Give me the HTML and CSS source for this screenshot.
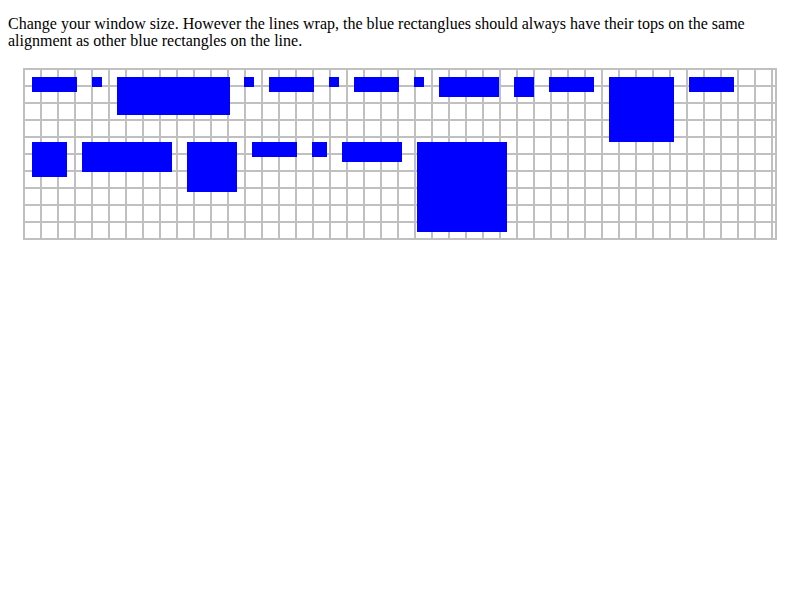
FILE: index.html
```html
<!DOCTYPE html>
<html>
<head>
<meta charset="utf-8">
<title>Inline block top alignment</title>
<link rel="stylesheet" href="styles.css">
</head>
<body>
<p class="intro">Change your window size. However the lines wrap, the blue rectanglues should always have their tops on the same alignment as other blue rectangles on the line.</p>
<div class="grid">
  <div class="row">
    <div class="box" style="width:45px;height:15px"></div>
    <div class="box" style="width:10px;height:10px"></div>
    <div class="box tight" style="width:113px;height:38px"></div>
    <div class="box" style="width:10px;height:10px"></div>
    <div class="box" style="width:45px;height:15px"></div>
    <div class="box" style="width:10px;height:10px"></div>
    <div class="box" style="width:45px;height:15px"></div>
    <div class="box" style="width:10px;height:10px"></div>
    <div class="box" style="width:60px;height:20px"></div>
    <div class="box" style="width:20px;height:20px"></div>
    <div class="box" style="width:45px;height:15px"></div>
    <div class="box" style="width:65px;height:65px"></div>
    <div class="box" style="width:45px;height:15px"></div>
  </div>
  <div class="row">
    <div class="box" style="width:35px;height:35px"></div>
    <div class="box" style="width:90px;height:30px"></div>
    <div class="box" style="width:50px;height:50px"></div>
    <div class="box" style="width:45px;height:15px"></div>
    <div class="box" style="width:15px;height:15px"></div>
    <div class="box" style="width:60px;height:20px"></div>
    <div class="box" style="width:90px;height:90px"></div>
  </div>
</div>
</body>
</html>
```
FILE: styles.css
```css
html, body {
  background: #ffffff;
}
body {
  margin: 8px;
  font-family: "Liberation Serif", "Times New Roman", serif;
  font-size: 16px;
  color: #000000;
}
.intro {
  margin: 7px 0 0 0;
  line-height: 17px;
  width: 784px;
}
.grid {
  box-sizing: border-box;
  margin: 19px 0 0 15px;
  width: 754px;
  height: 172px;
  padding: 9px 0 0 9px;
  border-right: 2px solid #c0c0c0;
  background-color: #ffffff;
  background-image:
    linear-gradient(to right, #c0c0c0 0, #c0c0c0 2px, transparent 2px),
    linear-gradient(to bottom, #c0c0c0 0, #c0c0c0 2px, transparent 2px);
  background-size: 17px 17px;
  background-origin: border-box;
  display: flex;
  flex-direction: column;
}
.row {
  display: flex;
  align-items: flex-start;
  gap: 15px;
}
.box {
  background: #0000ff;
  flex: none;
}
.tight {
  margin-right: -1px;
}
```
